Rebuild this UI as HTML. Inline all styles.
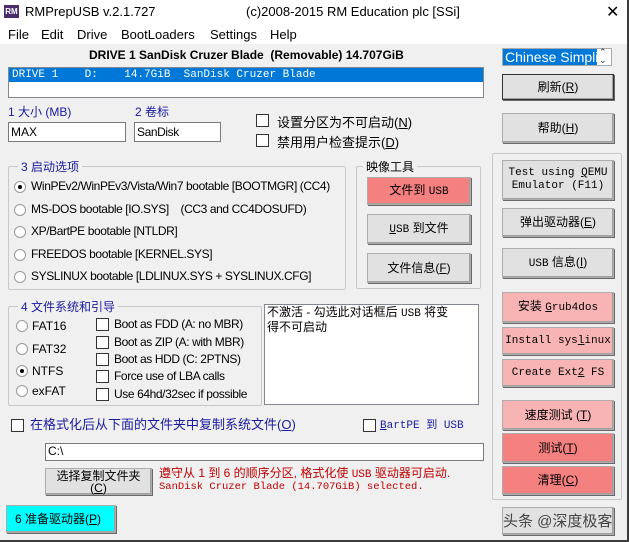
<!DOCTYPE html><html><head><meta charset="utf-8"><style>
*{box-sizing:border-box;margin:0;padding:0}
body{width:629px;height:542px;background:#f0f0f0;position:relative;overflow:hidden;font-family:"Liberation Sans","Noto Sans CJK SC",sans-serif;font-size:12px;color:#000}
.a{position:absolute;white-space:nowrap}
.btn{position:absolute;background:#e1e1e1;border:1px solid #adadad;box-shadow:inset -1px -1px 0 #a0a0a0,1px 1px 0 #696969;display:flex;align-items:center;justify-content:center;text-align:center;font-size:12px;line-height:13px}
.btn>span{display:block;white-space:nowrap}
.mono{font-family:"Liberation Mono","Noto Sans CJK SC",monospace;font-size:11px}
.pk{background:#f8b4b4}.rd{background:#f48080}
.grp{position:absolute;border:1px solid #c8c8c8;border-radius:2px}
.gl{position:absolute;background:#f0f0f0;padding:0 3px;color:#1a1aa0;font-size:12px;top:-9px;white-space:nowrap}
.cb{position:absolute;width:13px;height:13px;border:1px solid #333;background:#fff}
.rb{position:absolute;width:12px;height:12px;border-radius:50%;border:1px solid #999;background:#fff}
.rb.on::after{content:"";position:absolute;left:3px;top:3px;width:4px;height:4px;border-radius:50%;background:#000}
.inp{position:absolute;background:#fff;border:1px solid #7a7a7a;font-size:12px;padding:2px 2px;line-height:14px}
.blue{color:#1a1aa0}
.n{letter-spacing:-0.4px}
</style></head><body>
<div class="a" style="left:0;top:0;width:629px;height:44px;background:#fff"></div>
<div class="a" style="left:4px;top:5px;width:15px;height:13px;background:#4a2c6a;color:#fff;font-size:8px;font-weight:bold;line-height:13px;text-align:center">RM</div>
<div class="a" style="left:25px;top:4px;font-size:13px">RMPrepUSB v.2.1.727</div>
<div class="a" style="left:246px;top:4px;font-size:13px">(c)2008-2015 RM Education plc [SSi]</div>
<div class="a" style="left:606px;top:2px;font-size:16px">✕</div>
<div class="a" style="left:8px;top:27px;font-size:13px">File</div>
<div class="a" style="left:41px;top:27px;font-size:13px">Edit</div>
<div class="a" style="left:77px;top:27px;font-size:13px">Drive</div>
<div class="a" style="left:121px;top:27px;font-size:13px">BootLoaders</div>
<div class="a" style="left:210px;top:27px;font-size:13px">Settings</div>
<div class="a" style="left:270px;top:27px;font-size:13px">Help</div>
<div class="a" style="left:89px;top:48px;font-weight:bold;font-size:12px">DRIVE 1 SanDisk Cruzer Blade&nbsp; (Removable) 14.707GiB</div>
<div class="a" style="left:8px;top:67px;width:476px;height:31px;background:#fff;border:1px solid #828790"></div>
<div class="a mono" style="left:9px;top:68px;width:474px;height:14px;background:#0078d7;color:#fff;padding-left:3px;line-height:14px">DRIVE 1&nbsp;&nbsp;&nbsp; D:&nbsp;&nbsp;&nbsp; 14.7GiB&nbsp; SanDisk Cruzer Blade</div>
<div class="a" style="left:502px;top:48px;width:110px;height:18px;background:#fff;border:1px solid #aaa"></div>
<div class="a" style="left:503px;top:49px;width:94px;height:16px;background:#0078d7;color:#fff;font-size:14px;line-height:16px;overflow:hidden;padding-left:2px">Chinese Simplified</div>
<div class="a" style="left:599px;top:48px;font-size:9px;line-height:8px;color:#333">⌃<br>⌄</div>
<div class="btn" style="left:502px;top:74px;width:112px;height:26px;border:1px solid #333"><span>刷新(<u>R</u>)</span></div>
<div class="a blue" style="left:8px;top:103px">1 大小 (MB)</div>
<div class="a blue" style="left:135px;top:103px">2 卷标</div>
<div class="inp" style="left:8px;top:122px;width:118px;height:20px">MAX</div>
<div class="inp n" style="left:134px;top:122px;width:87px;height:20px">SanDisk</div>
<div class="cb" style="left:256px;top:114px"></div><div class="a" style="left:277px;top:112px;font-size:13px">设置分区为不可启动(<u>N</u>)</div>
<div class="cb" style="left:256px;top:134px"></div><div class="a" style="left:277px;top:132px;font-size:13px">禁用用户检查提示(<u>D</u>)</div>
<div class="btn" style="left:502px;top:113px;width:112px;height:30px"><span>帮助(<u>H</u>)</span></div>

<div class="grp" style="left:8px;top:166px;width:338px;height:124px"><div class="gl" style="left:9px">3 启动选项</div></div>
<div class="rb on" style="left:14px;top:181px"></div><div class="a n" style="left:31px;top:179px">WinPEv2/WinPEv3/Vista/Win7 bootable [BOOTMGR] (CC4)</div>
<div class="rb" style="left:14px;top:204px"></div><div class="a n" style="left:31px;top:202px">MS-DOS bootable [IO.SYS]&nbsp;&nbsp;&nbsp; (CC3 and CC4DOSUFD)</div>
<div class="rb" style="left:14px;top:226px"></div><div class="a n" style="left:31px;top:224px">XP/BartPE bootable [NTLDR]</div>
<div class="rb" style="left:14px;top:249px"></div><div class="a n" style="left:31px;top:247px">FREEDOS bootable [KERNEL.SYS]</div>
<div class="rb" style="left:14px;top:271px"></div><div class="a n" style="left:31px;top:269px">SYSLINUX bootable [LDLINUX.SYS + SYSLINUX.CFG]</div>

<div class="grp" style="left:356px;top:166px;width:125px;height:123px"><div class="gl" style="left:6px;color:#000">映像工具</div></div>
<div class="btn rd" style="left:367px;top:177px;width:104px;height:28px"><span>文件到 <span class="mono">USB</span></span></div>
<div class="btn" style="left:367px;top:214px;width:104px;height:30px"><span><span class="mono"><u>U</u>SB</span> 到文件</span></div>
<div class="btn" style="left:367px;top:253px;width:104px;height:30px"><span>文件信息(<u>F</u>)</span></div>

<div class="grp" style="left:492px;top:153px;width:130px;height:347px"></div>
<div class="btn mono" style="left:502px;top:160px;width:112px;height:40px"><span>Test using <u>Q</u>EMU<br>Emulator (F11)</span></div>
<div class="btn" style="left:502px;top:208px;width:112px;height:29px"><span>弹出驱动器(<u>E</u>)</span></div>
<div class="btn" style="left:502px;top:248px;width:112px;height:30px"><span><span class="mono">USB</span> 信息(<u>I</u>)</span></div>
<div class="btn pk" style="left:502px;top:292px;width:112px;height:31px"><span>安装 <span class="mono"><u>G</u>rub4dos</span></span></div>
<div class="btn pk mono" style="left:502px;top:327px;width:112px;height:28px"><span>Install sys<u>l</u>inux</span></div>
<div class="btn pk mono" style="left:502px;top:359px;width:112px;height:28px"><span>Create Ext<u>2</u> FS</span></div>
<div class="btn pk" style="left:502px;top:400px;width:112px;height:30px"><span>速度测试 (<u>T</u>)</span></div>
<div class="btn rd" style="left:502px;top:433px;width:112px;height:30px"><span>测试(<u>T</u>)</span></div>
<div class="btn rd" style="left:502px;top:466px;width:112px;height:29px"><span>清理(<u>C</u>)</span></div>
<div class="btn" style="left:502px;top:507px;width:112px;height:28px;font-size:15px;color:#444;justify-content:flex-start;overflow:hidden"><span>头条 @深度极客</span></div>

<div class="grp" style="left:8px;top:306px;width:254px;height:100px"><div class="gl" style="left:9px">4 文件系统和引导</div></div>
<div class="rb" style="left:16px;top:320px"></div><div class="a" style="left:32px;top:319px">FAT16</div>
<div class="rb" style="left:16px;top:343px"></div><div class="a" style="left:32px;top:342px">FAT32</div>
<div class="rb on" style="left:16px;top:365px"></div><div class="a" style="left:32px;top:364px">NTFS</div>
<div class="rb" style="left:16px;top:385px"></div><div class="a" style="left:32px;top:384px">exFAT</div>
<div class="cb" style="left:96px;top:318px"></div><div class="a n" style="left:114px;top:317px">Boot as FDD (A: no MBR)</div>
<div class="cb" style="left:96px;top:336px"></div><div class="a n" style="left:114px;top:335px">Boot as ZIP (A: with MBR)</div>
<div class="cb" style="left:96px;top:353px"></div><div class="a n" style="left:114px;top:352px">Boot as HDD (C: 2PTNS)</div>
<div class="cb" style="left:96px;top:370px"></div><div class="a n" style="left:114px;top:369px">Force use of LBA calls</div>
<div class="cb" style="left:96px;top:388px"></div><div class="a n" style="left:114px;top:387px">Use 64hd/32sec if possible</div>
<div class="a" style="left:264px;top:304px;width:215px;height:101px;background:#fff;border:1px solid #828790;white-space:normal;padding:1px 18px 1px 2px;line-height:13px;font-size:12px">不激活 - 勾选此对话框后 <span class="mono">USB</span> 将变得不可启动</div>
<div class="cb" style="left:11px;top:419px"></div><div class="a blue" style="left:30px;top:414px;font-size:13px">在格式化后从下面的文件夹中复制系统文件(<u>O</u>)</div>
<div class="cb" style="left:363px;top:419px"></div><div class="a blue mono" style="left:380px;top:416px"><u>B</u>artPE 到 USB</div>
<div class="inp" style="left:45px;top:443px;width:439px;height:18px;line-height:12px;padding:1px 2px">C:\</div>
<div class="btn" style="left:45px;top:468px;width:107px;height:27px;line-height:12px"><span>选择复制文件夹<br>(<u>C</u>)</span></div>
<div class="a" style="left:159px;top:464px;color:#c00000;font-size:12px">遵守从 1 到 6 的顺序分区, 格式化使 <span class="mono">USB</span> 驱动器可启动.</div>
<div class="a mono" style="left:159px;top:481px;color:#c00000;font-size:10.5px">SanDisk Cruzer Blade (14.707GiB) selected.</div>
<div class="btn" style="left:6px;top:505px;width:110px;height:28px;background:#00ffff;justify-content:flex-start;padding-left:8px"><span>6 准备驱动器(<u>P</u>)</span></div>
<div class="a" style="left:627px;top:0;width:2px;height:542px;background:#3c3c3c"></div>
<div class="a" style="left:0;top:540px;width:629px;height:2px;background:#3c3c3c"></div>
</body></html>
